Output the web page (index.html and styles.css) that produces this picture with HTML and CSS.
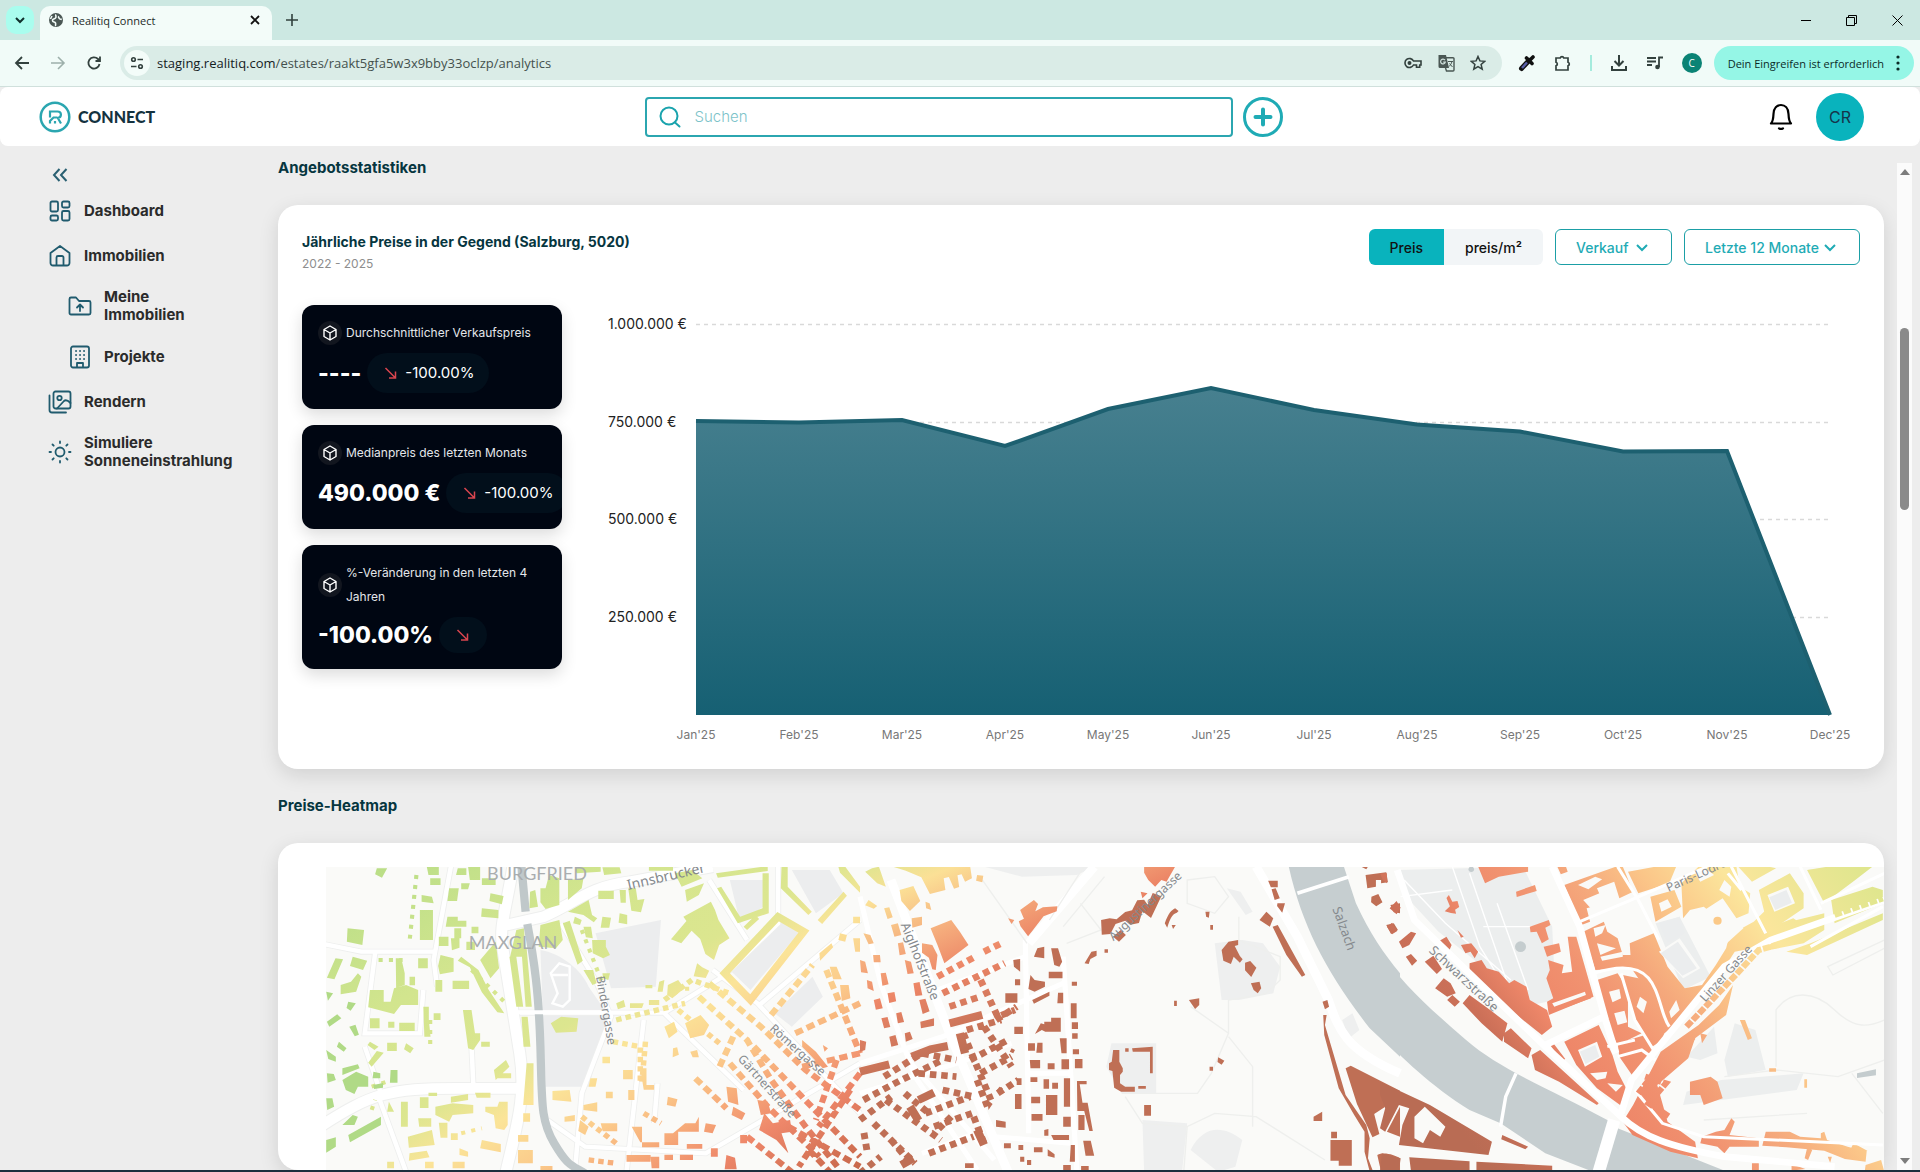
FILE: index.html
```html
<!DOCTYPE html>
<html lang="de">
<head>
    <meta charset="UTF-8">
    <meta name="viewport" content="width=device-width, initial-scale=1.0">
    <title>Realitiq Connect</title>
    <link rel="stylesheet" href="styles.css">
</head>
<body>
    <!-- Browser window -->
    <div class="tabstrip">
        <button class="tab-search" aria-label="Tabs durchsuchen"><svg width="12" height="12" viewBox="0 0 12 12"><path d="M2 4l4 4 4-4" fill="none" stroke="#10302c" stroke-width="2"/></svg></button>
        <div class="tab">
            <svg width="16" height="16" viewBox="0 0 16 16"><circle cx="8" cy="8" r="7" fill="#4a5754"/><path d="M8 2.500c-1 1.500 1 2-.5 3.500s-3 .5-3 2.500 2.500 1 3 2.500-.5 2 .5 2.800M10 4.500c1 .5.500 2 2 2.500l1.800.5M4 4L2.500 7" fill="none" stroke="#f3fcf9" stroke-width="1.600"/></svg>
            <span class="tab-title">Realitiq Connect</span>
            <button class="plain" aria-label="Tab schließen"><svg width="10" height="10" viewBox="0 0 10 10"><path d="M1 1l8 8M9 1l-8 8" stroke="#111" stroke-width="1.800"/></svg></button>
        </div>
        <button class="plain new-tab" aria-label="Neuer Tab"><svg width="12" height="12" viewBox="0 0 12 12"><path d="M6 0v12M0 6h12" stroke="#30403d" stroke-width="1.600"/></svg></button>
        <div class="window-buttons">
            <button class="plain" aria-label="Minimieren"><svg width="10" height="10" viewBox="0 0 10 10"><path d="M0 5.500h10" stroke="#000"/></svg></button>
            <button class="plain" aria-label="Wiederherstellen"><svg width="11" height="11" viewBox="0 0 11 11"><path d="M.5 2.500h8v8h-8zM2.500 2.500v-2h8v8h-2" fill="none" stroke="#000"/></svg></button>
            <button class="plain" aria-label="Schließen"><svg width="11" height="11" viewBox="0 0 11 11"><path d="M.5.5l10 10M10.500.5l-10 10" stroke="#000"/></svg></button>
        </div>
    </div>

    <div class="toolbar">
        <div class="nav-buttons">
            <button class="plain" aria-label="Zurück"><svg width="16" height="16" viewBox="0 0 16 16"><path d="M15 8H3M8 2L2 8l6 6" fill="none" stroke="#33413e" stroke-width="1.800"/></svg></button>
            <button class="plain" aria-label="Vorwärts"><svg width="16" height="16" viewBox="0 0 16 16"><path d="M1 8h12M8 2l6 6-6 6" fill="none" stroke="#9db0ab" stroke-width="1.600"/></svg></button>
            <button class="plain" aria-label="Neu laden"><svg width="16" height="16" viewBox="0 0 16 16"><path d="M13.500 9A5.600 5.600 0 1 1 12 4l2 2M14 1.500V6H9.500" fill="none" stroke="#33413e" stroke-width="1.800"/></svg></button>
        </div>
        <div class="omnibox">
            <span class="site-info"><svg width="14" height="14" viewBox="0 0 14 14" fill="none" stroke="#33413e" stroke-width="1.600"><circle cx="3.500" cy="3.500" r="1.800"/><path d="M7.500 3.500H13M1 10.500h5.500"/><circle cx="10.500" cy="10.500" r="1.800"/></svg></span>
            <span class="url">staging.realitiq.com<span class="url-path">/estates/raakt5gfa5w3x9bby33oclzp/analytics</span></span>
            <span class="omnibox-icons">
                <svg width="18" height="12" viewBox="0 0 18 12" fill="none" stroke="#33413e" stroke-width="1.600"><path d="M9.500 4A4.500 4.500 0 1 0 9.500 8h3v2.200h3.200V8H17V4z"/><circle cx="5.500" cy="6" r="1.200" fill="#33413e"/></svg>
                <svg width="18" height="18" viewBox="0 0 18 18"><path d="M1.500 1h7.500l3 13H3a1.500 1.500 0 0 1-1.500-1.500z" fill="#4a5754"/><path d="M9 3.700h7a1 1 0 0 1 1 1V16a1 1 0 0 1-1 1H9.500L8.500 14" fill="none" stroke="#4a5754" stroke-width="1.400"/><path d="M8 6.200a2.400 2.400 0 1 0 .3 2H6.200" fill="none" stroke="#cfe0dc" stroke-width="1.200"/><path d="M11 7.500h5M15 7.500c-.6 2.300-2 4-3 5M12.500 9.500l3 3.500" fill="none" stroke="#4a5754"/></svg>
                <svg width="16" height="16" viewBox="0 0 16 16"><path d="M8 1.500l1.900 4.400 4.800.4-3.600 3.200 1.100 4.700L8 11.700l-4.200 2.500 1.100-4.700L1.300 6.300l4.800-.4z" fill="none" stroke="#33413e" stroke-width="1.500"/></svg>
            </span>
        </div>
        <div class="extensions">
            <svg width="18" height="18" viewBox="0 0 18 18"><path d="M3.500 14.500l7.500-8" stroke="#111" stroke-width="5" stroke-linecap="round"/><path d="M4 14l5-5.500" stroke="#5a60a8" stroke-width="2.400"/><path d="M8.500 4l5.500 5.500M11.500 6.500L15 3" stroke="#111" stroke-width="3.600" stroke-linecap="round"/></svg>
            <svg width="18" height="18" viewBox="0 0 18 18"><path d="M2 4h4.200a1.900 1.900 0 0 1 3.600 0H14v4.200a1.900 1.900 0 0 1 0 3.600V16H2v-4.200a1.900 1.900 0 0 0 0-3.600z" fill="none" stroke="#33413e" stroke-width="1.700"/></svg>
            <span class="divider"></span>
            <svg width="18" height="18" viewBox="0 0 18 18"><path d="M9 1v10M4.500 7L9 11.500 13.500 7M2 12v4h14v-4" fill="none" stroke="#33413e" stroke-width="2"/></svg>
            <svg width="18" height="14" viewBox="0 0 18 14"><path d="M1 2h9M1 5.500h9M1 9h5M13 11V1.500h4" fill="none" stroke="#33413e" stroke-width="1.800"/><circle cx="11.500" cy="11" r="2.300" fill="#33413e"/></svg>
            <span class="profile">C</span>
        </div>
        <button class="attention">Dein Eingreifen ist erforderlich
            <svg width="4" height="16" viewBox="0 0 4 16" fill="#0b2b26"><circle cx="2" cy="2" r="1.600"/><circle cx="2" cy="8" r="1.600"/><circle cx="2" cy="14" r="1.600"/></svg>
        </button>
    </div>

    <!-- App -->
    <div class="app">
        <header class="header">
            <a href="#" class="logo">
                <svg width="32" height="32" viewBox="0 0 32 32" fill="none" stroke="#2ba6b0"><circle cx="16" cy="16" r="14.300" stroke-width="2.500"/><path d="M11 16.500V10.500h7.500c4.500 0 4.500 6 .3 6.500l3.200 5.500M11 22.500v-2.500l3.500-3.500h4M16 22.500v-2.500" stroke-width="2.200"/></svg>
                <span>CONNECT</span>
            </a>
            <div class="search-group">
                <label class="search">
                    <svg width="22" height="22" viewBox="0 0 22 22" fill="none" stroke="#1aa3ad" stroke-width="2"><circle cx="10" cy="10" r="8.500"/><path d="M16 16.500l4.500 4" stroke-linecap="round"/></svg>
                    <input type="text" placeholder="Suchen" aria-label="Suchen">
                </label>
                <button class="plain" aria-label="Hinzufügen"><svg width="40" height="40" viewBox="0 0 40 40" fill="none" stroke="#1fabb5"><circle cx="20" cy="20" r="18.500" stroke-width="3"/><path d="M20 12.500v15M12.500 20h15" stroke-width="4" stroke-linecap="round"/></svg></button>
            </div>
            <div class="user">
                <button class="plain" aria-label="Benachrichtigungen"><svg width="24" height="28" viewBox="0 0 24 28" fill="none" stroke="#000" stroke-width="2.200" stroke-linecap="round" stroke-linejoin="round"><path d="M2 20.500h20c-2-2-2.300-5-2.500-9.500C19.300 5 16 2 12 2s-7.300 3-7.500 9c-.2 4.500-.5 7.500-2.500 9.500z"/><path d="M10 25.300a3.500 3.500 0 0 0 4 0"/></svg></button>
                <button class="avatar">CR</button>
            </div>
        </header>

        <div class="body">
            <nav class="sidebar">
                <button class="plain collapse" aria-label="Menü einklappen"><svg width="16" height="14" viewBox="0 0 16 14" fill="none" stroke="#2a6072" stroke-width="2"><path d="M7.500 1L2 7l5.500 6M14.500 1L9 7l5.500 6"/></svg></button>
                <ul>
                    <li><a href="#">
                        <svg viewBox="0 0 24 24"><rect x="2.500" y="2.500" width="7.500" height="10" rx="1.500"/><rect x="14" y="2.500" width="7.500" height="6" rx="1.500"/><rect x="2.500" y="16.500" width="7.500" height="5" rx="1.500"/><rect x="14" y="12" width="7.500" height="9.500" rx="1.500"/></svg>
                        <span>Dashboard</span></a></li>
                    <li><a href="#">
                        <svg viewBox="0 0 24 24"><path d="M2.500 9L12 2l9.500 7v10a2.500 2.500 0 0 1-2.500 2.500H5A2.500 2.500 0 0 1 2.500 19zM8.500 21.500v-8a1.500 1.500 0 0 1 1.500-1.500h4a1.500 1.500 0 0 1 1.500 1.500v8"/></svg>
                        <span>Immobilien</span></a></li>
                    <li class="sub"><a href="#">
                        <svg viewBox="0 0 24 24"><path d="M1.500 19V5A1.500 1.500 0 0 1 3 3.500h5L11 7h10a1.500 1.500 0 0 1 1.500 1.500V19a1.500 1.500 0 0 1-1.500 1.500H3A1.500 1.500 0 0 1 1.500 19zM12 17v-6M9 13.500l3-3 3 3"/></svg>
                        <span>Meine Immobilien</span></a></li>
                    <li class="sub"><a href="#">
                        <svg viewBox="0 0 24 24"><rect x="3" y="1.500" width="18" height="21" rx="2"/><path d="M9 22v-4h6v4"/><path d="M8 6h.1M12 6h.1M16 6h.1M8 10h.1M12 10h.1M16 10h.1M8 14h.1M12 14h.1M16 14h.1"/></svg>
                        <span>Projekte</span></a></li>
                    <li><a href="#">
                        <svg viewBox="0 0 24 24"><rect x="5.500" y="1.500" width="17" height="17" rx="2"/><circle cx="11.500" cy="8" r="2.200"/><path d="M9 18.500l7-7.500c1.500-1.500 3-1.500 6.500 2M1.500 5.500V20a2.500 2.500 0 0 0 2.500 2.500h14"/></svg>
                        <span>Rendern</span></a></li>
                    <li><a href="#">
                        <svg viewBox="0 0 24 24"><circle cx="12" cy="12" r="4.500"/><path d="M12 1.500v1.500M12 21v1.500M1.500 12H3M21 12h1.500M4.500 4.500l1.200 1.200M18.300 18.300l1.200 1.200M4.500 19.500l1.200-1.200M18.300 5.700l1.200-1.200"/></svg>
                        <span>Simuliere Sonneneinstrahlung</span></a></li>
                </ul>
            </nav>

            <main class="content">
                <h2>Angebotsstatistiken</h2>
                <section class="card">
                    <div class="card-header">
                        <div>
                            <h3>Jährliche Preise in der Gegend (Salzburg, 5020)</h3>
                            <p class="years">2022 - 2025</p>
                        </div>
                        <div class="filters">
                            <div class="toggle">
                                <button class="active">Preis</button><button>preis/m²</button>
                            </div>
                            <div class="dropdown deal">
                                <select aria-label="Angebotsart"><option>Verkauf</option><option>Miete</option></select>
                                <svg width="12" height="8" viewBox="0 0 12 8"><path d="M1 1l5 5 5-5"/></svg>
                            </div>
                            <div class="dropdown period">
                                <select aria-label="Zeitraum"><option>Letzte 12 Monate</option><option>Letzte 4 Jahre</option></select>
                                <svg width="12" height="8" viewBox="0 0 12 8"><path d="M1 1l5 5 5-5"/></svg>
                            </div>
                        </div>
                    </div>

                    <div class="card-body">
                        <div class="stats">
                            <div class="stat">
                                <div class="stat-title"><span class="cube"><svg viewBox="0 0 16 16"><path d="M8 1l6 3.500v7L8 15l-6-3.500v-7zM2 4.500L8 8l6-3.500M8 8v7"/></svg></span>Durchschnittlicher Verkaufspreis</div>
                                <div class="stat-value"><strong>----</strong><span class="change"><svg viewBox="0 0 20 20"><path d="M4.500 5l10 10M14.500 8.500V15H8"/></svg>-100.00%</span></div>
                            </div>
                            <div class="stat">
                                <div class="stat-title"><span class="cube"><svg viewBox="0 0 16 16"><path d="M8 1l6 3.500v7L8 15l-6-3.500v-7zM2 4.500L8 8l6-3.500M8 8v7"/></svg></span>Medianpreis des letzten Monats</div>
                                <div class="stat-value"><strong>490.000 €</strong><span class="change"><svg viewBox="0 0 20 20"><path d="M4.500 5l10 10M14.500 8.500V15H8"/></svg>-100.00%</span></div>
                            </div>
                            <div class="stat">
                                <div class="stat-title"><span class="cube"><svg viewBox="0 0 16 16"><path d="M8 1l6 3.500v7L8 15l-6-3.500v-7zM2 4.500L8 8l6-3.500M8 8v7"/></svg></span>%-Veränderung in den letzten 4 Jahren</div>
                                <div class="stat-value"><strong>-100.00%</strong><span class="change"><svg viewBox="0 0 20 20"><path d="M4.500 5l10 10M14.500 8.500V15H8"/></svg></span></div>
                            </div>
                        </div>

                        <svg class="chart" viewBox="0 0 1274 440" role="img" aria-label="Preisverlauf">
                            <defs>
                                <linearGradient id="area" x1="0" y1="0" x2="0" y2="1">
                                    <stop offset="0" stop-color="#47808f"/>
                                    <stop offset="1" stop-color="#166073"/>
                                </linearGradient>
                            </defs>
                            <path class="grid" d="M110 19.500h1134M110 117.500h1134M110 214.500h1134M110 312.500h1134"/>
                            <path fill="url(#area)" d="M110 116l103 1.500 103-2.500 103 26 103-37 103-21 103 22 103 14.500 103 7 103 20 104-.5 103 264H110z"/>
                            <path class="line" d="M110 116l103 1.500 103-2.500 103 26 103-37 103-21 103 22 103 14.500 103 7 103 20 104-.5 103 264"/>
                            <g class="y-labels">
                                <text x="22" y="24">1.000.000 €</text>
                                <text x="22" y="122">750.000 €</text>
                                <text x="22" y="219">500.000 €</text>
                                <text x="22" y="317">250.000 €</text>
                            </g>
                            <g class="x-labels">
                                <text x="110" y="434">Jan'25</text>
                                <text x="213" y="434">Feb'25</text>
                                <text x="316" y="434">Mar'25</text>
                                <text x="419" y="434">Apr'25</text>
                                <text x="522" y="434">May'25</text>
                                <text x="625" y="434">Jun'25</text>
                                <text x="728" y="434">Jul'25</text>
                                <text x="831" y="434">Aug'25</text>
                                <text x="934" y="434">Sep'25</text>
                                <text x="1037" y="434">Oct'25</text>
                                <text x="1141" y="434">Nov'25</text>
                                <text x="1244" y="434">Dec'25</text>
                            </g>
                        </svg>
                    </div>
                </section>

                <h2>Preise-Heatmap</h2>
                <section class="card map-card">
                    <svg class="map" viewBox="0 0 1558 303" role="img" aria-label="Preise-Heatmap Salzburg">
                        <defs>
                            <linearGradient id="west" gradientUnits="userSpaceOnUse" x1="0" y1="0" x2="832" y2="1360">
                                <stop offset="0" stop-color="#b3dc85"/><stop offset=".3" stop-color="#d2e58e"/><stop offset=".5" stop-color="#dce68f"/><stop offset=".59" stop-color="#fbe498"/><stop offset=".7" stop-color="#fbc98a"/><stop offset=".78" stop-color="#f6a878"/><stop offset=".86" stop-color="#ee876a"/><stop offset="1" stop-color="#c9694c"/>
                            </linearGradient>
                            <linearGradient id="centre" gradientUnits="userSpaceOnUse" x1="0" y1="0" x2="260" y2="585">
                                <stop offset="0" stop-color="#d8e68e"/><stop offset=".2" stop-color="#fbe096"/><stop offset=".45" stop-color="#f5ac7c"/><stop offset=".65" stop-color="#ec8566"/><stop offset="1" stop-color="#bf6f55"/>
                            </linearGradient>
                            <linearGradient id="east" gradientUnits="userSpaceOnUse" x1="-240" y1="180" x2="880" y2="-660">
                                <stop offset="0" stop-color="#b96c54"/><stop offset=".18" stop-color="#cc7058"/><stop offset=".29" stop-color="#ee8769"/><stop offset=".4" stop-color="#f19270"/><stop offset=".52" stop-color="#f5a97c"/><stop offset=".63" stop-color="#fbc588"/><stop offset=".77" stop-color="#fbe69c"/><stop offset="1" stop-color="#e0e68e"/>
                            </linearGradient>
                        </defs>
                        <rect width="1558" height="303" fill="#fafaf8"/>

                        <!-- Maxglan, Burgfried -->
                        <g transform="translate(-6 -7) scale(.3444 .3333)">
                            <path fill="#ecedee" d="M800 220l190-40-15 200-130 5zM640 270c60 10 120 60 140 110l60 90-60 210H655zM1190 330l150-150 50 40-140 170zM1190 60h110v70l-80 60zM1370 30h110l40 70-80 60zM1320 460l110-110 30 60-90 90z"/>
                            <g fill="none" stroke="#eeefee">
                                <path stroke-width="38" d="M560 20c-20 130-40 180-30 240s30 190 50 320-10 220-40 356M520 200l130-30c90-40 130-90 250-105l240-45M0 800c150-100 200-115 400-115h180"/>
                                <path stroke-width="18" d="M0 250l120 25h220M580 458h420l170-108 160-160V20M700 190l100 170 45 110-85 230-20 236M1130 60l110 180M1140 330l130 100 298 330M1270 440l298-260M940 480l-50 456M380 20l-50 280 10 80M160 280l-30 240h160l10-130M170 710l80 226M130 560l50 150M660 780l110 80 350 20 150-90 298-180M1000 460l230 230M980 670l-10 120M440 560l5 110"/>
                            </g>
                            <g fill="none" stroke="#fff">
                                <path stroke-width="32" d="M560 20c-20 130-40 180-30 240s30 190 50 320-10 220-40 356M520 200l130-30c90-40 130-90 250-105l240-45M0 800c150-100 200-115 400-115h180"/>
                                <path stroke-width="13" d="M0 250l120 25h220M580 458h420l170-108 160-160V20M700 190l100 170 45 110-85 230-20 236M1130 60l110 180M1140 330l130 100 298 330M1270 440l298-260M940 480l-50 456M380 20l-50 280 10 80M160 280l-30 240h160l10-130M170 710l80 226M130 560l50 150M660 780l110 80 350 20 150-90 298-180M1000 460l230 230M980 670l-10 120M440 560l5 110"/>
                                <path stroke-width="7" d="M670 340l25-30 30 10v100l-20 20-30-10 15-30-20-60zM670 345h50"/>
                            </g>
                            <path fill="none" stroke="#c0c8ca" stroke-width="24" d="M585 20l12 135M602 192c20 110 33 200 38 368s0 220 40 290 50 65 90 90"/>
                            <path fill="none" stroke="#fff" stroke-width="12" d="M570 457h250"/>
                            <g fill="url(#west)">
                                <path d="M165 25h30l-15 28-20-10zM310 20h35v25h-30zM320 55h30v20h-30zM400 25h25v20h-30zM430 20h35v40h-30zM470 55h40v20h-40zM375 85h28l-5 38h-28zM410 70h25l-5 18h-20zM495 100l38 8-5 25-36-10zM295 105l30 5 5 20-35-5zM470 145l48 5v25l-50-5zM290 150h38v90h-38zM370 170h30v12h25v18h-60zM440 200h20v20h-20zM390 205h20v30h-20zM345 230h28v28h-28zM380 235h25v28l-22 8zM425 245h25v25h-25zM640 195l55-15 10 60-20 25-50-5zM610 95l15-5 8 50-25 5zM640 85h15l10-40 30 10v80l-40 12-15-20zM720 60l45-5-5 30-40 35zM740 20h75v15l-70 5zM820 22h50l5 18-50 5zM955 20h70v12h-70zM808 92h45v25h-45zM870 90h18v38h-15zM895 85h22l5 35 20-3-10 40-28-5zM820 170l25 3-5 30h-25zM870 160l22 5v28l-25-5z"/>
                                <path d="M720 155l60-35 10 45 15 10-10 12-30-22zM740 170l20 10-5 15-20-5zM765 200h22l5 35-20-3zM705 190l20-8 38 120-15 12zM790 240h40v20l12 25-20 10-30-15zM765 330h28l10 40-12 5zM820 340h22l-5 20-15-5zM1055 170l80-45 12 25 10 30 32 55-30 20-15 45-25-18-15-45-25-25-30 38-30-12 45-55zM1030 40l50-10 30 25-60 25zM1060 90l55-20-15 35-35 20zM1150 40l150-22v15l-145 20zM1165 80l55 90 65-25V40h18v120l-90 30-60-105zM1340 20h18v60l70 75-10 10-80-80zM1445 180l75-85 10 12-72 85zM1505 20h20l43 60v18l-58-60zM1230 200l35-35 10 12-35 33z"/>
                                <path d="M80 205l48 5-5 45-45-10zM45 295l22 3-25 60-22-5zM95 290l42 12-12 28-38-12zM60 375l30-10 20-25 10 10-15 45-45 8zM285 295h28v30h-28zM260 350h16v26h-16zM220 295h16l10 45v35l-25 8zM350 285l38 10v40l-40 8-5-25zM385 362h48v25h-48zM145 390h40v35h20l10-40 35-10 35 15v45h-50l-20 27-75-20zM410 290l50 40 30 60 45 70-20-3-45-60-35-75-35-20zM465 300l45-55 10 80-25 30zM145 475h28v30h-28zM198 485h18v18h-18zM230 488h45v25h-45zM300 440h16v40l5 50h-18zM330 460h20v20h-20zM415 450h25l10 70h15v20l-20 30-15-5zM550 290h20l20 150h-20zM585 270l15-5 15 175h-18zM570 210l22-5 5 60-10 25h-35zM335 360h20v35h-20zM145 545l25 15-12 10-20-15zM165 573l20 5-35 42-10-12zM195 548h28v25h-28zM250 550l22 15-10 15-18-12zM468 545h25v15h-25z"/>
                                <path d="M585 470h18l8 90h-20zM600 610h20v125h-30zM505 630l35-30 10 20-40 40zM520 640h35v15h-40zM670 490l30-20 50 5-5 40-60 3zM675 693l50-3 5 35-55-5zM590 760h20v25h-20zM575 870h43v40h-43zM575 825h30v20h-30zM480 740h35l5-15h25v70l-10 15-25-5-5-40-25-10zM380 710l50-8v18l-50 8zM450 698h45v15h-40zM335 740l50-10 60 5v25l-60 5-10 20-40-20zM290 712h25v32h-25zM315 698h25v10h-25zM235 725h20v75h-20zM200 725l15 30h-20zM285 775h38v25h-35zM255 830l70-20 8 45-75 8zM260 880l50-8 8 20-60 10zM345 788h25v45h-20zM380 820h20v20h-20zM470 840l55 12v25l-60-12zM405 865l25 10v15l-25-5zM305 905h25v20h-25zM385 905h35v20h-35zM640 918h35v15h-35zM195 905h20v20h-20z"/>
                                <path d="M1095 310l15 12 20 10-10 22-35-5zM1010 375l30-15 18 25-35 30-15-10zM985 365l15-5-5 35h-15zM945 375h20v10h-20zM860 430l22-10 5 20-22 8zM900 430h40l-5 14h-35zM955 420h30v15h-30zM1060 380h12v12h-12zM1450 280l35-30 5 12-38 40zM1510 220l20 5-5 20-20-5zM1548 170h20v20h-20zM1548 235h20v40h-14zM1480 320h20l15 38h-25zM1510 375h25l5 40-25 8z"/>
                                <path d="M1000 500l28-15 10 30-25 20zM1060 490l45-25 25 30-15 30-40 10zM820 590h22v20h-22zM880 630h28v28h-28zM765 735l40-8v28l-40-5zM815 790h48v24h-42zM895 690h18v30h-18zM930 625h18v50h22v14h-30zM1010 710l28 8-6 22-25-5zM1025 565l12-3 5 22-18 8zM1075 575l20-5 5 22h-18zM785 655h20l-5 25h-20zM830 695h20v20h-20zM890 885h70v20h-70zM905 800h30v62h50v-15h-55zM1000 820h25l35-30h30l10-20v45h-60v40h-40zM1065 852h45v14h-45zM1120 790l30 5-10 25-25-5zM960 890h25v35h-22zM1000 884h25v16h-25zM1045 884h38v16h-38zM1135 865h20v25h-20zM1180 885l25 8 5 35h-35zM755 780l25 20-10 25-20-12zM710 770l30-5v18l-30 2zM1220 825h20v25h-20zM1270 720l30 5 10 35-30 5zM1180 680l30 5 5 50-30-10zM1200 740l35 20-10 20-30-15zM1290 760l25 30 50-10 5 35-30 5 20 60-35-40-50-30zM1400 540l40 35 35 45-15 5-60-65zM1465 575l10-10-15-10z"/>
                            </g>
                            <g fill="none" stroke="url(#west)">
                                <path stroke-width="22" d="M1175 340l155-170 75 45-155 205z"/>
                                <path stroke-width="18" stroke-dasharray="24 13" d="M1130 370l150 130 130 130 158 120M1100 410l140 130 70 120 100 140 100 130M1310 465l120-150M1200 530l-40 90M1380 520l188-90M1400 620l168-40M1470 330l98 250M1190 610l110 130 150 150M1260 560l130 140 178 190M1360 800l208 120M1500 600l-60 180M1568 640l-120 160M1540 690l-150 230M1090 655l90 90M1240 830l130 106M1420 870l60 66"/>
                                <path stroke-width="16" stroke-dasharray="16 12" d="M860 480l200-50M850 545l80 15v110M760 770l100 80M1000 420l80-60 110 40M945 545l-10 120M780 900l80 10M1040 450l120 100M940 760l50 30"/>
                                <path stroke-width="12" stroke-dasharray="12 18" d="M170 300h70M280 45l-20 200M440 330l100 100M760 210l60 160M320 480v90M150 680l60-20M150 750l10-30M410 820l60-15"/>
                            </g>
                            <path fill="#b0da86" d="M18 395l20 5-15 22zM20 485l30-22 12 12-35 25zM82 425l22 5-15 22-12-8zM85 500l18-6 10 30-12 5zM55 545l22 20-8 10-20-15zM18 570l28 20v15l-22-8zM20 640l20 2 6 18-24 8zM65 625l45-12 5 12-50 20zM65 660l40-25 35 15v30h-30l-10 22-25-12zM205 630h20v38h-22zM155 635l20 5v15h-22zM65 795l30-30 15 5-10 25zM82 825l95-55v25l-90 52zM18 840l28-8v28l-28 18zM18 715h18l5 25-20 10zM155 675l28-6v14l-26 4z"/>
                        </g>

                        <!-- Mülln, Altstadt -->
                        <g transform="translate(534 -7) scale(.3444 .3333)">
                            <path fill="#eeefef" d="M1030 250l80-10 60 10 50 70-20 80-100 20h-50zM730 550h130v150h-100l-45-80zM360 20h320l-50 25-160 5zM820 780l130 10-15 146h-110zM960 870c40-80 100-70 150-30l-20 80-50 16zM1400 480l30-20 20 50-30 25zM1065 85l40 10 35 60-20 10z"/>
                            <g fill="none" stroke="#fff">
                                <path stroke-width="26" d="M90 60l170 460 130 320 40 96M680 20L490 250M1150 20l120 210 90 190c30 90 50 150 208 220"/>
                                <path stroke-width="15" d="M480 240l10 580M590 290l40 646M0 610l240-80 350-160M390 830l220 20M0 110l60 260 100 280 180 280M200 400l280-110M140 600l250 300M0 700l280-90 160-60M180 880l180-70M490 640h120"/>
                            </g>
                            <g fill="none" stroke="#eeefed" stroke-width="4">
                                <path d="M355 60l130 190M760 700h220l40-60 50-120-110-80M1070 520v-100l110-20 40-40v-70l-120-50v-70M770 710l50 80 130 10 80-40 120 10 200 130M950 800l-10 136M1140 800V620l-70-90M550 180l100-160M590 200l120-150M600 250l100-40-60-80M950 60l80-10 40 60-40 50-80-30z"/>
                            </g>
                            <path fill="#c6ced0" d="M1245 20h160l35 110c40 90 80 150 128 210v250l-88-85c-120-160-195-300-235-485z"/>
                            <path stroke="#fff" stroke-width="11" d="M1270 100l150-50"/>
                            <g fill="url(#centre)">
                                <path d="M95 20h225l5 35-20 10-10-22-12 3 5 35-15 5-15-35-15 4 5 35-45 12-25-50-45-20zM35 25l20-5 20 60-25-10-35-35zM115 90l40-12 20 45-30 30-25-30zM340 45l18 2-3 20-18-5zM70 145l15-3 10 30-15 5zM25 120l25 18-10 8-25-10zM150 175l30-5v25l-28 8zM190 125l12 5 5 20-15-5zM205 205l60-25 25 35 25 40-70 55-20-55zM180 250l30 5 15 30-5 45-10-2-10-35-20-15zM90 195l20-5 10 35-20 5zM110 250l15-3 8 35-18 4zM10 220l20 5 10 25-15 3zM38 285h20l2 22h-20zM130 300l18 5 8 35-18 2zM60 340l15-2 8 35-18 4zM155 370l18-4 8 40-20 2zM80 400l20-4 5 28-20 5zM172 420l18-4 12 38-20 8zM40 420l18-5 8 30-20 4zM62 475l18-4 8 30-18 4zM105 460l15-4 8 30-18 4zM85 530l18-5 8 30-20 5zM130 520l15-5 8 22-20 8zM175 485l40-10v22l-38 8zM20 360l15 5 5 28-18-8zM0 300l15 5 8 35-20-3zM0 540l18 5-3 25-15 5z"/>
                                <path d="M465 150l40-30 12 12-8 22 22-12 42-3-2 15-38 15-30 40-15 20-22-30-5-15 15-8zM430 175l18 5-8 12zM825 20h90l-25 45-15-5-18 20-20-20-12-22zM815 95l20 5-15 15z"/>
                            </g>
                            <g fill="none" stroke="url(#centre)">
                                <path stroke-width="20" stroke-dasharray="19 14" d="M225 350l110-60M240 400l180-90M260 440l90-30M350 360l50 110 50-20M360 275l50-25M10 720l110-60 120-60M0 780l90-70M20 870l-10-60M75 720l160 120M40 790l120 120M70 650l110-70 100 20M170 640l110 10M130 700l70 60M240 690l90 20M190 760l130-50M215 800l110-40M300 520l80 200M360 500l80 120M310 510l100-30M320 600l110-60M350 640l90-50M340 660l30 80M200 880l130-50M330 770l30 80M90 840l50 60M0 940l60-50M265 770l-50 50M400 700l60-40M395 480l60-40"/>
                                <path stroke-width="24" d="M0 635l85-22M150 590l55-22 50-10M260 490l95-25M290 520l15 60M170 720l45-22M145 740l25 42M120 915l35-20M340 810l20 45"/>
                            </g>
                            <g fill="#bf6f55">
                                <path d="M515 265l20-5v35l-30-5zM555 265h20l12 40-8 15-15-5zM445 300l20-3v38l-18-15zM548 335h40v20h-40zM450 358h15v18h-15zM495 345l12 15 30 5v15l-30 15-18-8zM422 400h35v28h-35zM575 398h15v32h-17zM500 420l50-25v12l-45 24zM615 365h15v12h-15zM612 430h17v45h-17zM615 487h18v20h-18zM616 520h16v16h-16zM448 500h25v22h-25zM525 490l10 3v-8h20v-12h28v42h-45l-10-5-20 12zM488 550h20v22h-20zM515 548h15v30h-18zM580 535h20v45h-15zM618 568h18v15h-18zM493 600h30v25h-28zM545 610h20v18h-20zM585 598h22v30h-22zM624 597h22v28h-22zM495 652h20v14h-20zM533 658h16v28h-16zM558 668h17v18h-17zM592 655h18v85h-18zM450 702h19v45h-19zM540 705h33v60h-33zM497 710h26v20h-26zM498 762h32v20h-32zM590 770h22v30h-22zM455 655h14v20h-14zM630 663h28v10h-20l8 55h15l15 85h-10l-15-60h-20zM634 765h18v45h-18zM535 810l12-3v20h-12zM555 825h52v15h-45zM612 855h12v50h-15zM648 842h22l10 45h-25zM505 862h25v15h-25zM545 868l20 15v10l-20-5zM418 850h20v15h-20zM460 855h14v15h-14zM642 918h22v12h-22zM590 915h22v15h-22zM465 890h12v15h-12zM485 900h12v15h-12zM395 780l28 5v18l-28-3zM305 910h25v14h-25zM370 720l15 12-12 18zM440 565l10 5-5 10-10-5zM405 680l10 5-8 12-10-6z"/>
                                <path d="M700 180l25-5 20 3 25-22 20-5 15-30 20-2 10 15 15-35 25 10-30 65-25-20-10 35-25 5-15-12-28 10-15 30-25 2zM735 230l22-20 15 15-20 20zM652 310l20-35 15-3v15l-18 10-5 15zM710 268h10v10h-10zM735 570h18v35l10 20v10l-8 10v25l15 10h28v15h-40l-20-12-5-50-10-3v-20l8-5zM790 565l60-5v80h-8v-65h-50zM770 565h10v10h-10zM808 678h22v8h-22zM825 735h20v32h-20zM1050 270l20-25 28-5v15l-10 3 15 30 8 10-8 10-18-18-8 22-22-10zM1118 308l15-5 18 20-15 28-18-20zM1135 370l25-5 5 20-10 15-12-10zM955 420l30-5v20l-12 12zM912 422h8v16h-8zM1003 155h12l-2 18-8-3zM1017 195h8v14h-8zM885 190c10-30 20-40 30-45l10 8-5 5c-15 5-20 20-28 45zM905 195h12l-8 12zM1040 592l18 10-8 12-12-8zM1015 620h10v12h-10zM1160 180l20-25 20 20-10 25zM1198 200l15-5 80 150-10 5-45-65zM1185 62h28v20h-20zM1195 88l12-3 12 30-15 5zM1212 130h22l-8 28-15-20zM1343 425l14-5 5 20-12 8zM1317 770l25-15v28h-25zM1368 815h17v20h-17zM1366 840h62v77h-38v-15h-24z"/>
                                <path d="M1345 465h10l-5 30 60 210 60 90 10 40-5 60 15 40h-10l-15-60v-60l-30-50-45-80-42-160zM1410 625l15-8 143 75v25l-30-5-15 30-30 20 15 60-20 10-45-100zM1530 815l38-75v90zM1502 885c20-10 50 0 66 10v40h-55z"/>
                                <path d="M1468 45l60-8 5 30-20 3v-10h-15v20l-25 5zM1485 110l20-8 12 25-18 12-15-12zM1540 135l28-5v30l-18-3zM1528 195l22-5 12 20-20 12zM1455 20h20l-5 8z"/>
                            </g>
                        </g>

                        <!-- Neustadt, right bank of the Salzach -->
                        <g transform="translate(1054 -7) scale(.3444 .3333)">
                            <path fill="#eceeee" d="M55 30l360-10 85 180 10 220-70 15-270-220-90-100zM800 190l70-20 90 180-80 40zM1000 600l30-110 60 20 30 120-110 20zM990 660l240-20-20 50-330 45 10-40zM890 590l80-90 10 80-50 20zM1240 30l80-10-30 30z"/>
                            <g fill="none" stroke="#fff" stroke-width="4">
                                <path d="M70 60l120 130 190 170M210 20l80 240 60 100M260 40l110 330M300 200h150M340 130l90 260M60 110l150-20"/>
                            </g>
                            <g fill="none" stroke="#eeefed" stroke-width="4">
                                <path d="M1150 620v-170c40-60 110-60 170 0 60 60 100 50 145 30M1000 650l150-20 180 20 135-50M1370 640l90 120M940 780l300-20M1465 240l-165 80 15 25 150-80"/>
                            </g>
                            <path fill="#c6ced0" d="M0 270c60 100 150 180 250 270s250 150 410 240l30 25 320 131H620l-140-56-130-90-90-40C150 680 60 590 0 525z"/>
                            <path fill="none" stroke="#fff" stroke-width="10" d="M395 640l-30 70-15 90"/>
                            <path stroke="#fff" stroke-width="36" d="M680 780l-45 156"/>
                            <g fill="url(#east)">
                                <path d="M285 20h145v15l-85 15-40 20zM395 95l55-20 5 18-58 18zM515 20h25l5 15-20 8zM200 105l10 20 15-2 5 18-12 8 3 12-15-2-18-5 15-15-10-25zM435 200l55-20 5 15-15 8 10 35-20 12-15-35-18 2zM545 230h25l50 180-130 55-5-40 18-10-20-60 10-25-5-30 45 15-5 25 30-5zM475 260l45-10 5 25-40 15z"/>
                                <path d="M535 75l150-55h20l30 75-40 20-15-50-50 20 15 35-10 15-35 10 10 40-25 10zM590 215l60-30 10 30 30 20 15 50h30v40l-110 5zM720 35l80-15h60l-20 50-90 30zM785 110l70-20 20 50-75 45zM725 250l70-30 40 100 50 65 50-10 40-60 30-50 10-40 70-40 80-80-15 90 50-20 30 20-100 60-100 20-50 80-90 110-70 60-60-50 30-60-60-90z"/>
                                <path d="M630 360l60-20 30 50v110l40 20-70 35-30-60zM705 345l70 15 30 60 25 80-10 40-30 20-40-60-30-80zM690 550l80-25 25 50-60 75-40-60zM535 545l100-50 40 90 15 50 30 60-10 50-80-60-60-70zM490 430l115-45 8 30-120 45z"/>
                                <path d="M875 70l50-50h110l10 60 30 20-5 60-70 30-60-50-40 10-20 25zM1040 20h90l20 5-70 40zM1100 90l90-50 40 60v45l-100 70zM1240 30l60-10h130l-50 40-90 70zM1310 120l120-40 30 10v40l-140 60zM1110 240l100-60 80-20v50l-60 40-100 20zM1250 250l210-90v20l-220 105-60-10z"/>
                                <path d="M735 735l80-160 110-80 60-60 40-60-20 90-90 70-20 60-90 80 30 110 80 60 8 50-80-20-110-50-28-40zM900 665l60-15 20 15 15 50-55 20-10-30h-30zM1045 480h15l20 55-12 5zM930 520l20 5-15 25zM935 830l40-15 25-5 20-35 10 10-15 40 85 10v25h-85l-15 20-20-20-50-10zM1120 815h70l30 15 60 5v-15l10-5 8 25 60 20 55 15-3 30-60-8-60-25-110-10-70-5zM1240 865l15 5-12 30-10-5zM1080 910h20v20h-20zM1195 912l40 15-40 5zM1410 915l45-15 8 30h-55zM1300 890h12l-5 18zM1375 850l40 22-10 10-40-12zM1232 658h8v25h-8zM1130 625h20v10h-20z"/>
                                <path d="M0 665l145 70 180 110-10 40-260-30 10-60 20-50-30-10-40 80-15-10 15-60-15-40zM5 880l55 15-5 38H0zM85 892l175 12v30H90zM280 905l220 12v15H280zM355 825l75 35-8 8-70-30zM440 585l25-15 170 160-5 5-110-70-70-35zM490 550l8-8 40 55-10 5zM0 40h20v30l-12-10zM28 145l20-22 12 20-12 20zM20 200l15-12 15 25-15 10zM55 245l35-30 15 5-20 35-20 10zM75 290l15-8 18 20-15 15zM130 305l25-18 25 40-15 15zM168 245l25-15 15 25-10 25zM235 255l30-5 20 25-10 20-12-20-15 5zM225 210l18 20-8 3z"/>
                                <path d="M260 310l35-10 15 25 35 10 30 35 15-10 35 20 10 40 50 30 15 50-30 25-110-90-50-45-50-50zM160 385l25-30 20 15 15 30-25 10zM240 430l20-25 60 45 50 40-15 55-60-55zM360 520l20-15 60 60-10 30-70-50zM195 420l15-15 22 20-15 15z"/>
                            </g>
                            <g fill="#fafaf8">
                                <path d="M665 395l30-8 5 28-25 12zM680 460l30-8 8 35-28 8zM575 570l55-25 15 45-50 30zM905 175l90-60 60 90-80 75zM1125 105l60-25 20 50-60 25zM575 75l50-25 20 8-40 30zM590 120l70-30 20 30-55 40zM620 205l35-10-10 25-20 10zM630 250l55 15-45 20zM640 290l65-15v15l-60 12zM810 130l25-12 12 22-30 15zM810 275l60-40 60 90-50 30zM500 430l95-35 3 10-92 35zM755 410l20 15-10 35-20-20zM840 455l20-35 10 30-25 25zM915 40l30-15 25 20-40 20zM985 90l15-30 20 20-5 30zM610 640l50-5-5 20-25 5zM660 670l45 5-20 20zM100 770l30-30 60 60-15 30-30-20-20 40-25-15z"/>
                            </g>
                            <path fill="#ebedee" d="M580 575l45-20 12 35-40 22zM1130 112l50-22 16 38-48 22zM815 280l50-35 55 80-42 22zM810 190l60-20 15 50-50 30z"/>
                            <circle cx="980" cy="182" r="12" fill="#fbc988"/>
                            <circle cx="408" cy="260" r="16" fill="#c4ccce"/>
                            <circle cx="265" cy="28" r="8" fill="#c4ccce"/>
                            <path fill="#c4ccce" d="M1385 640l55-12v18l-55 8z"/>
                            <g fill="none" stroke="#fff">
                                <path stroke-width="20" d="M50 30l50 150 370 370 230 220c60 60 140 90 300 120l320 30M500 20l80 180 75 280 30 100M470 560l180-90M1465 120l-330 120-135 80-270 340-30 100"/>
                                <path stroke-width="9" d="M580 185l160-70 210-95M690 20l60 100 60 120M620 340c120-40 160 0 180 50s20 80 40 110M700 340l40 140 60 100M660 560l80-20M1020 20l100 200M1220 20l60 130M1250 260l210-120M1050 90l-40-50M740 690l80 100 120 40 520 25M690 590l70-20 40 30M1280 130l185-90"/>
                            </g>
                            <g fill="none" stroke="url(#east)" stroke-width="18">
                                <path stroke-dasharray="22 5" d="M750 700l70-90 90-80M890 500l120-130 90-100 70-20M770 650l60 20-50 60 60 40M1320 165l140-50"/>
                            </g>
                        </g>

                        <g class="districts">
                            <text x="211" y="13">BURGFRIED</text>
                            <text x="187" y="82">MAXGLAN</text>
                        </g>
                        <g class="streets">
                            <text transform="translate(341 14) rotate(-13)" class="large">Innsbrucker</text>
                            <text transform="translate(276 144) rotate(80)">Bindergasse</text>
                            <text transform="translate(469 186) rotate(42)">Römergasse</text>
                            <text transform="translate(438 222) rotate(48)">Gärtnerstraße</text>
                            <text transform="translate(590 96) rotate(68)" class="medium">Aiglhofstraße</text>
                            <text transform="translate(822 42) rotate(-43)">Augustinergasse</text>
                            <text transform="translate(1014 63) rotate(70)" class="medium">Salzach</text>
                            <text transform="translate(1135 115) rotate(43)" class="medium">Schwarzstraße</text>
                            <text transform="translate(1403 109) rotate(-48)">Linzer Gasse</text>
                            <text transform="translate(1394 2) rotate(-24)">Paris-Lodron-Straße</text>
                        </g>
                    </svg>
                </section>
            </main>

            <div class="scrollbar">
                <svg width="10" height="6" viewBox="0 0 10 6"><path d="M0 6l5-6 5 6z"/></svg>
                <div class="track"><div class="thumb"></div></div>
                <svg width="10" height="6" viewBox="0 0 10 6"><path d="M0 0l5 6 5-6z"/></svg>
            </div>
        </div>
    </div>
</body>
</html>
```

FILE: styles.css
```css
* {
    box-sizing: border-box;
}
body {
    margin: 0;
    height: 100vh;
    display: flex;
    flex-direction: column;
    overflow: hidden;
    font-family: Inter, "Open Sans", sans-serif;
    font-size: 14px;
    color: #222;
    background: #ededed;
    border-bottom: 2px solid #1d2f3d;
}
h2, h3, p, ul {
    margin: 0;
    padding: 0;
}
button, input, select {
    font-family: inherit;
}
svg {
    display: block;
    flex-shrink: 0;
}
.plain {
    background: none;
    border: none;
    padding: 0;
    cursor: pointer;
}

/* Browser window */
.tabstrip {
    display: flex;
    align-items: center;
    height: 40px;
    flex-shrink: 0;
    padding-left: 6px;
    background: #cce8e2;
    font-family: "Open Sans", sans-serif;
}
.tab-search {
    display: flex;
    align-items: center;
    justify-content: center;
    width: 28px;
    height: 28px;
    border: none;
    border-radius: 10px;
    background: #a9fdee;
}
.tab {
    display: flex;
    align-items: center;
    gap: 8px;
    align-self: flex-end;
    width: 232px;
    height: 34px;
    margin-left: 6px;
    padding: 0 12px 6px 8px;
    border-radius: 10px 10px 0 0;
    background: #f3fcf9;
}
.tab-title {
    flex: 1;
    font-size: 11px;
    color: #1c2b28;
}
.new-tab {
    margin-left: 14px;
}
.window-buttons {
    display: flex;
    gap: 35px;
    margin-left: auto;
    padding-right: 17px;
}
.toolbar {
    display: flex;
    align-items: center;
    height: 47px;
    flex-shrink: 0;
    padding: 0 6px 0 14px;
    background: #f1fbf8;
    border-bottom: 1px solid #d0e0dc;
    font-family: "Open Sans", sans-serif;
}
.nav-buttons {
    display: flex;
    gap: 20px;
    margin-right: 18px;
}
.omnibox {
    display: flex;
    align-items: center;
    flex: 1;
    height: 34px;
    padding: 0 16px 0 4px;
    border-radius: 17px;
    background: #daece7;
}
.site-info {
    display: flex;
    align-items: center;
    justify-content: center;
    width: 26px;
    height: 26px;
    border-radius: 13px;
    background: #f3fcf9;
}
.url {
    margin-left: 7px;
    font-size: 13px;
    color: #14211e;
}
.url-path {
    color: #44514e;
}
.omnibox-icons {
    display: flex;
    align-items: center;
    gap: 15px;
    margin-left: auto;
}
.extensions {
    display: flex;
    align-items: center;
    gap: 18px;
    padding: 0 12px 0 16px;
}
.divider {
    width: 2px;
    height: 16px;
    background: #a5ebdd;
}
.profile {
    width: 20px;
    height: 20px;
    border-radius: 10px;
    background: #0b8375;
    color: #fff;
    font-size: 10px;
    line-height: 20px;
    text-align: center;
}
.attention {
    display: flex;
    align-items: center;
    gap: 12px;
    height: 34px;
    padding: 0 14px;
    border: none;
    border-radius: 17px;
    background: #95f6e6;
    color: #0b2b26;
    font-size: 11px;
    white-space: nowrap;
}

/* App */
.app {
    display: flex;
    flex-direction: column;
    flex: 1;
    min-height: 0;
}
.header {
    display: grid;
    grid-template-columns: 1fr auto 1fr;
    align-items: center;
    height: 59px;
    flex-shrink: 0;
    padding: 0 32px 0 39px;
    border-radius: 8px;
    background: #fff;
}
.logo {
    display: flex;
    align-items: center;
    gap: 7px;
    color: #14323f;
    font-family: Lato, sans-serif;
    font-size: 16px;
    font-weight: 900;
    text-decoration: none;
}
.search-group {
    display: flex;
    align-items: center;
    gap: 10px;
}
.search {
    display: flex;
    align-items: center;
    gap: 14px;
    width: 588px;
    height: 40px;
    padding: 0 12px;
    border: 2px solid #2ba6b0;
    border-radius: 4px;
}
.search input {
    flex: 1;
    border: none;
    outline: none;
    padding: 0;
    background: none;
    font-size: 15px;
    font-weight: 300;
}
.search input::placeholder {
    color: #7cc3c9;
}
.user {
    display: flex;
    align-items: center;
    justify-content: flex-end;
    gap: 23px;
    padding-right: 24px;
}
.avatar {
    width: 48px;
    height: 48px;
    border: none;
    border-radius: 24px;
    background: #09b3bd;
    color: #16344a;
    font-size: 16px;
}
.body {
    display: flex;
    flex: 1;
    min-height: 0;
}

.sidebar {
    width: 254px;
    flex-shrink: 0;
    padding: 22px 0 0 48px;
}
.collapse {
    display: block;
    margin: 0 0 6px 4px;
}
.sidebar ul {
    list-style: none;
}
.sidebar a {
    display: flex;
    align-items: center;
    gap: 12px;
    min-height: 45px;
    padding: 10px 0;
    color: #2b2b2b;
    font-size: 15px;
    font-weight: 700;
    line-height: 18px;
    text-decoration: none;
}
.sidebar a svg {
    width: 24px;
    height: 24px;
    fill: none;
    stroke: #205b6e;
    stroke-width: 1.8;
    stroke-linecap: round;
    stroke-linejoin: round;
}
.sidebar .sub {
    padding-left: 20px;
}
.sidebar li span {
    width: min-content;
}

.content {
    flex: 1;
    min-width: 0;
    overflow: hidden;
    padding: 10px 13px 0 24px;
}
h2, h3 {
    color: #06363f;
    font-weight: 700;
}
h2 {
    font-size: 15px;
    line-height: 24px;
    margin-bottom: 25px;
}
h3 {
    font-size: 14px;
    line-height: 26px;
}
.card {
    margin-bottom: 25px;
    padding: 24px;
    border-radius: 20px;
    background: #fff;
    box-shadow: 0 6px 20px rgba(0, 0, 0, 0.12);
}
.card-header {
    display: flex;
    justify-content: space-between;
    align-items: flex-start;
    margin-bottom: 32px;
}
.years {
    color: #8e8e8e;
    font-size: 12px;
    line-height: 18px;
}
.filters {
    display: flex;
    gap: 12px;
}
.toggle {
    display: flex;
    border-radius: 6px;
    overflow: hidden;
}
.toggle button {
    height: 36px;
    padding: 0 21px;
    border: none;
    background: #f2f5f7;
    color: #111;
    font-size: 14px;
    font-weight: 500;
}
.toggle .active {
    background: #09b3bd;
}
.dropdown {
    position: relative;
}
.deal {
    width: 117px;
}
.period {
    width: 176px;
}
.dropdown select {
    appearance: none;
    width: 100%;
    height: 36px;
    padding: 0 20px;
    border: 1px solid #1b9fa6;
    border-radius: 6px;
    background: #fff;
    color: #1fabb5;
    font-size: 14px;
    font-weight: 500;
}
.dropdown svg {
    position: absolute;
    right: 24px;
    top: 15px;
    fill: none;
    stroke: #1fabb5;
    stroke-width: 2;
    pointer-events: none;
}
.card-body {
    display: flex;
    gap: 24px;
}
.stats {
    display: flex;
    flex-direction: column;
    gap: 16px;
    width: 260px;
    flex-shrink: 0;
}
.stat {
    padding: 16px;
    border-radius: 12px;
    background: #000612;
    color: #fff;
    overflow: hidden;
    box-shadow: 0 6px 16px rgba(0, 0, 0, 0.14);
}
.stat-title {
    display: flex;
    align-items: center;
    gap: 4px;
    margin-bottom: 8px;
    color: #e4e6ea;
    font-size: 12px;
    line-height: 24px;
}
.cube {
    display: flex;
    align-items: center;
    justify-content: center;
    width: 24px;
    height: 24px;
    flex-shrink: 0;
    border-radius: 12px;
    background: #12161f;
}
.cube svg {
    width: 16px;
    height: 16px;
    fill: none;
    stroke: #fff;
    stroke-width: 1.4;
    stroke-linejoin: round;
}
.stat-value {
    display: flex;
    align-items: center;
    gap: 6px;
    white-space: nowrap;
}
.stat-value strong {
    font-size: 23px;
    font-weight: 800;
    line-height: 36px;
}
.change {
    display: flex;
    align-items: center;
    gap: 4px;
    padding: 8px 14px;
    border-radius: 20px;
    background: #020f1b;
    font-size: 15px;
    line-height: 24px;
}
.change svg {
    width: 20px;
    height: 20px;
    fill: none;
    stroke: #d8454f;
    stroke-width: 1.5;
}
.chart {
    flex: 1;
    min-width: 0;
    overflow: visible;
}
.grid {
    stroke: #d9d9d9;
    stroke-width: 1.5;
    stroke-dasharray: 4 4;
}
.line {
    fill: none;
    stroke: #1d6070;
    stroke-width: 4;
}
.y-labels {
    font-size: 14px;
    fill: #222;
}
.x-labels {
    font-size: 12px;
    fill: #777;
    text-anchor: middle;
}

.map-card {
    padding: 24px 0 0 48px;
}
.map {
    width: 100%;
}
.districts {
    font-family: Lato, sans-serif;
    font-size: 18px;
    fill: #a9adaf;
    text-anchor: middle;
}
.streets {
    font-family: "Noto Sans", sans-serif;
    font-size: 12px;
    fill: #85898d;
    text-anchor: middle;
}
.medium {
    font-size: 13px;
}
.large {
    font-size: 14px;
}

.scrollbar {
    display: flex;
    flex-direction: column;
    align-items: center;
    width: 15px;
    margin: 17px 8px 0 0;
    padding: 6px 0;
    background: #fbfbfb;
    fill: #7d7d7d;
}
.track {
    flex: 1;
    width: 9px;
    padding-top: 153px;
}
.thumb {
    height: 182px;
    border-radius: 5px;
    background: #8a8a8a;
}
```
